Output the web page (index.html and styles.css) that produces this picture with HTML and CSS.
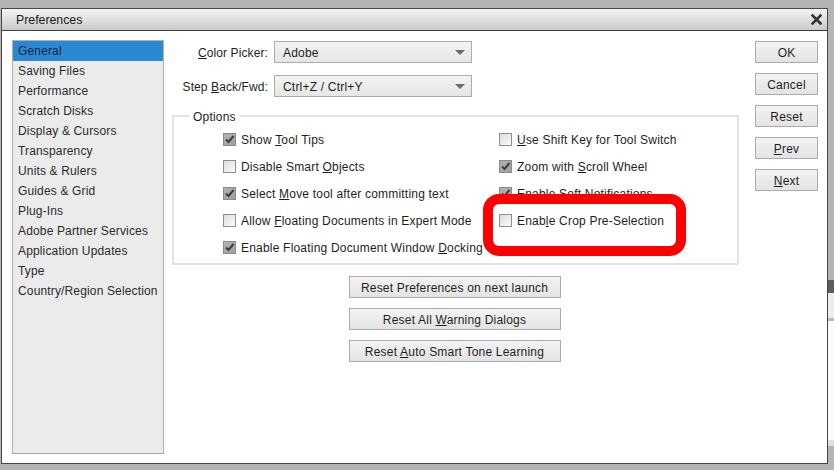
FILE: index.html
```html
<!DOCTYPE html>
<html>
<head>
<meta charset="utf-8">
<link rel="stylesheet" href="styles.css">
</head>
<body>
<div class="screen">
  <div class="dialog">
    <div class="titlebar">
      <span class="title">Preferences</span>
      <svg class="close" width="11" height="11" viewBox="0 0 11 11"><path d="M1.5 1.5 L9.5 9.5 M9.5 1.5 L1.5 9.5" stroke="#333" stroke-width="2.6" stroke-linecap="square"/></svg>
    </div>
    <div class="body">
      <ul class="sidebar">
        <li class="sel">General</li>
        <li>Saving Files</li>
        <li>Performance</li>
        <li>Scratch Disks</li>
        <li>Display &amp; Cursors</li>
        <li>Transparency</li>
        <li>Units &amp; Rulers</li>
        <li>Guides &amp; Grid</li>
        <li>Plug-Ins</li>
        <li>Adobe Partner Services</li>
        <li>Application Updates</li>
        <li>Type</li>
        <li>Country/Region Selection</li>
      </ul>
      <div class="main">
        <div class="fields">
          <span class="flabel"><u>C</u>olor Picker:</span>
          <div class="select"><span>Adobe</span><i class="arrow"></i></div>
          <span class="flabel">Step <u>B</u>ack/Fwd:</span>
          <div class="select"><span>Ctrl+Z / Ctrl+Y</span><i class="arrow"></i></div>
        </div>
        <div class="group">
          <div class="group-title">Options</div>
          <div class="checks">
            <div class="check on"><span class="box"><svg width="11" height="11" viewBox="0 0 11 11"><path d="M2 5.5 L4.5 8 L9.5 2" fill="none" stroke="#3c3c3c" stroke-width="2"/></svg></span><span>Show <u>T</u>ool Tips</span></div>
            <div class="check"><span class="box"></span><span><u>U</u>se Shift Key for Tool Switch</span></div>
            <div class="check"><span class="box"></span><span>Disable Smart <u>O</u>bjects</span></div>
            <div class="check on"><span class="box"><svg width="11" height="11" viewBox="0 0 11 11"><path d="M2 5.5 L4.5 8 L9.5 2" fill="none" stroke="#3c3c3c" stroke-width="2"/></svg></span><span>Zoom with <u>S</u>croll Wheel</span></div>
            <div class="check on"><span class="box"><svg width="11" height="11" viewBox="0 0 11 11"><path d="M2 5.5 L4.5 8 L9.5 2" fill="none" stroke="#3c3c3c" stroke-width="2"/></svg></span><span>Select <u>M</u>ove tool after committing text</span></div>
            <div class="check on"><span class="box"><svg width="11" height="11" viewBox="0 0 11 11"><path d="M2 5.5 L4.5 8 L9.5 2" fill="none" stroke="#3c3c3c" stroke-width="2"/></svg></span><span>Enable Soft Notifications</span></div>
            <div class="check"><span class="box"></span><span>Allow <u>F</u>loating Documents in Expert Mode</span></div>
            <div class="check over"><span class="box"></span><span>Enab<u>l</u>e Crop Pre-Selection</span></div>
            <div class="check on"><span class="box"><svg width="11" height="11" viewBox="0 0 11 11"><path d="M2 5.5 L4.5 8 L9.5 2" fill="none" stroke="#3c3c3c" stroke-width="2"/></svg></span><span>Enable Floating Document Window <u>D</u>ocking</span></div>
          </div>
          <div class="mark"></div>
        </div>
        <div class="resets">
          <div class="btn wide"><span>Reset Preferences on next launch</span></div>
          <div class="btn wide"><span>Reset All <u>W</u>arning Dialogs</span></div>
          <div class="btn wide"><span>Reset <u>A</u>uto Smart Tone Learning</span></div>
        </div>
      </div>
      <div class="side-buttons">
        <div class="btn"><span>OK</span></div>
        <div class="btn"><span>Cancel</span></div>
        <div class="btn"><span>Reset</span></div>
        <div class="btn"><span><u>P</u>rev</span></div>
        <div class="btn"><span><u>N</u>ext</span></div>
      </div>
    </div>
  </div>
  <div class="edge">
    <div class="e-gray1"></div>
    <div class="e-dark"></div>
    <div class="e-light"></div>
    <div class="e-line"></div>
    <div class="e-white"></div>
    <div class="e-band"></div>
  </div>
</div>
</body>
</html>
```

FILE: styles.css
```css
* { box-sizing: border-box; }
html, body {
  margin: 0;
  padding: 0;
  background: #b4b4b4;
  width: 834px;
  height: 470px;
  overflow: hidden;
  font-family: "Liberation Sans", Arial, sans-serif;
  font-size: 12px;
  letter-spacing: 0.2px;
  color: #1e1e1e;
}
u { text-decoration: underline; text-underline-offset: 1px; }

.screen {
  display: flex;
  align-items: flex-start;
  width: 834px;
  height: 470px;
}

.dialog {
  margin-top: 8px;
  margin-left: 1px;
  width: 827px;
  height: 456px;
  border: 1px solid #474747;
  background: #fff;
  display: flex;
  flex-direction: column;
}

.titlebar {
  height: 22px;
  flex: none;
  border-bottom: 1px solid #3e3e3e;
  background: linear-gradient(#f4f4f4, #cacaca);
  display: flex;
  align-items: center;
  justify-content: space-between;
  padding: 1px 5px 0 14px;
}
.title { font-size: 12.3px; letter-spacing: 0; color: #1a1a1a; }
.close { display: block; margin-top: -1px; }

.body {
  flex: 1;
  display: flex;
  align-items: flex-start;
  padding: 9px 0 0 10px;
}

.sidebar {
  list-style: none;
  margin: 0;
  padding: 0;
  width: 152px;
  height: 414px;
  flex: none;
  background: #ebebeb;
  border: 1px solid #b0b0b0;
  border-bottom-color: #a6a6a6;
}
.sidebar li {
  height: 20px;
  line-height: 19px;
  padding-top: 1px;
  padding-left: 5px;
  color: #2a2a2a;
  letter-spacing: 0.15px;
  white-space: nowrap;
}
.sidebar li.sel {
  background: #2b88d5;
  color: #14263a;
}

.main {
  width: 567px;
  margin-left: 8px;
  flex: none;
  display: flex;
  flex-direction: column;
}

.fields {
  display: grid;
  grid-template-columns: 96px 198px;
  column-gap: 6px;
  row-gap: 12px;
  align-items: center;
  margin-top: 1px;
}
.flabel { text-align: right; white-space: nowrap; padding-top: 1px; letter-spacing: 0.1px; }
.select {
  height: 22px;
  border: 1px solid #adadad;
  background: linear-gradient(#f3f3f3, #e6e6e6);
  display: flex;
  align-items: center;
  justify-content: space-between;
  padding: 1px 6px 0 8px;
}
.arrow {
  width: 0;
  height: 0;
  border-left: 5px solid transparent;
  border-right: 5px solid transparent;
  border-top: 5px solid #6b6b6b;
}

.group {
  position: relative;
  margin-top: 18px;
  height: 150px;
  border: 2px solid #e2e2e2;
}
.group-title {
  margin: -9px 0 0 15px;
  padding: 1px 4px 0;
  width: fit-content;
  line-height: 16px;
  background: #fff;
}
.checks {
  display: grid;
  grid-template-columns: 276px auto;
  grid-auto-rows: 27px;
  padding-left: 49px;
  margin-top: 1px;
}
.check {
  display: flex;
  align-items: center;
  gap: 5px;
  white-space: nowrap;
}
.check span:last-child { padding-top: 1px; }
.box {
  width: 13px;
  height: 13px;
  flex: none;
  border: 1px solid #8f8f8f;
  background: linear-gradient(135deg, #dcdcdc, #fbfbfb);
  display: flex;
  align-items: center;
  justify-content: center;
}
.check.on .box {
  border-color: #8a8a8a;
  background: linear-gradient(135deg, #b2b2b2, #a0a0a0);
}
.box svg { display: block; }
.check.over { position: relative; z-index: 2; }

.mark {
  position: absolute;
  left: 309px;
  top: 77px;
  width: 203px;
  height: 62px;
  border: 10px solid #ff0000;
  border-radius: 16px;
  background: #fff;
  z-index: 1;
}

.resets {
  display: flex;
  flex-direction: column;
  align-items: center;
  gap: 10px;
  margin-top: 11px;
  padding-right: 2px;
}

.btn {
  height: 22px;
  border: 1px solid #acacac;
  background: linear-gradient(#f3f3f3, #e3e3e3);
  display: flex;
  align-items: center;
  justify-content: center;
  padding-top: 1px;
  white-space: nowrap;
}
.btn.wide { width: 212px; }

.side-buttons {
  margin-left: 16px;
  margin-top: 1px;
  width: 63px;
  flex: none;
  display: flex;
  flex-direction: column;
  gap: 10px;
}

.edge {
  flex: 1;
  display: flex;
  flex-direction: column;
}
.e-gray1 { height: 280px; background: #b4b4b4; }
.e-dark { height: 13px; background: #5c5c5c; }
.e-light { height: 25px; background: #ececec; }
.e-line { height: 3px; background: #b9b9b9; }
.e-white { height: 119px; background: #fafafa; }
.e-band { height: 6px; background: #dedede; }
```
